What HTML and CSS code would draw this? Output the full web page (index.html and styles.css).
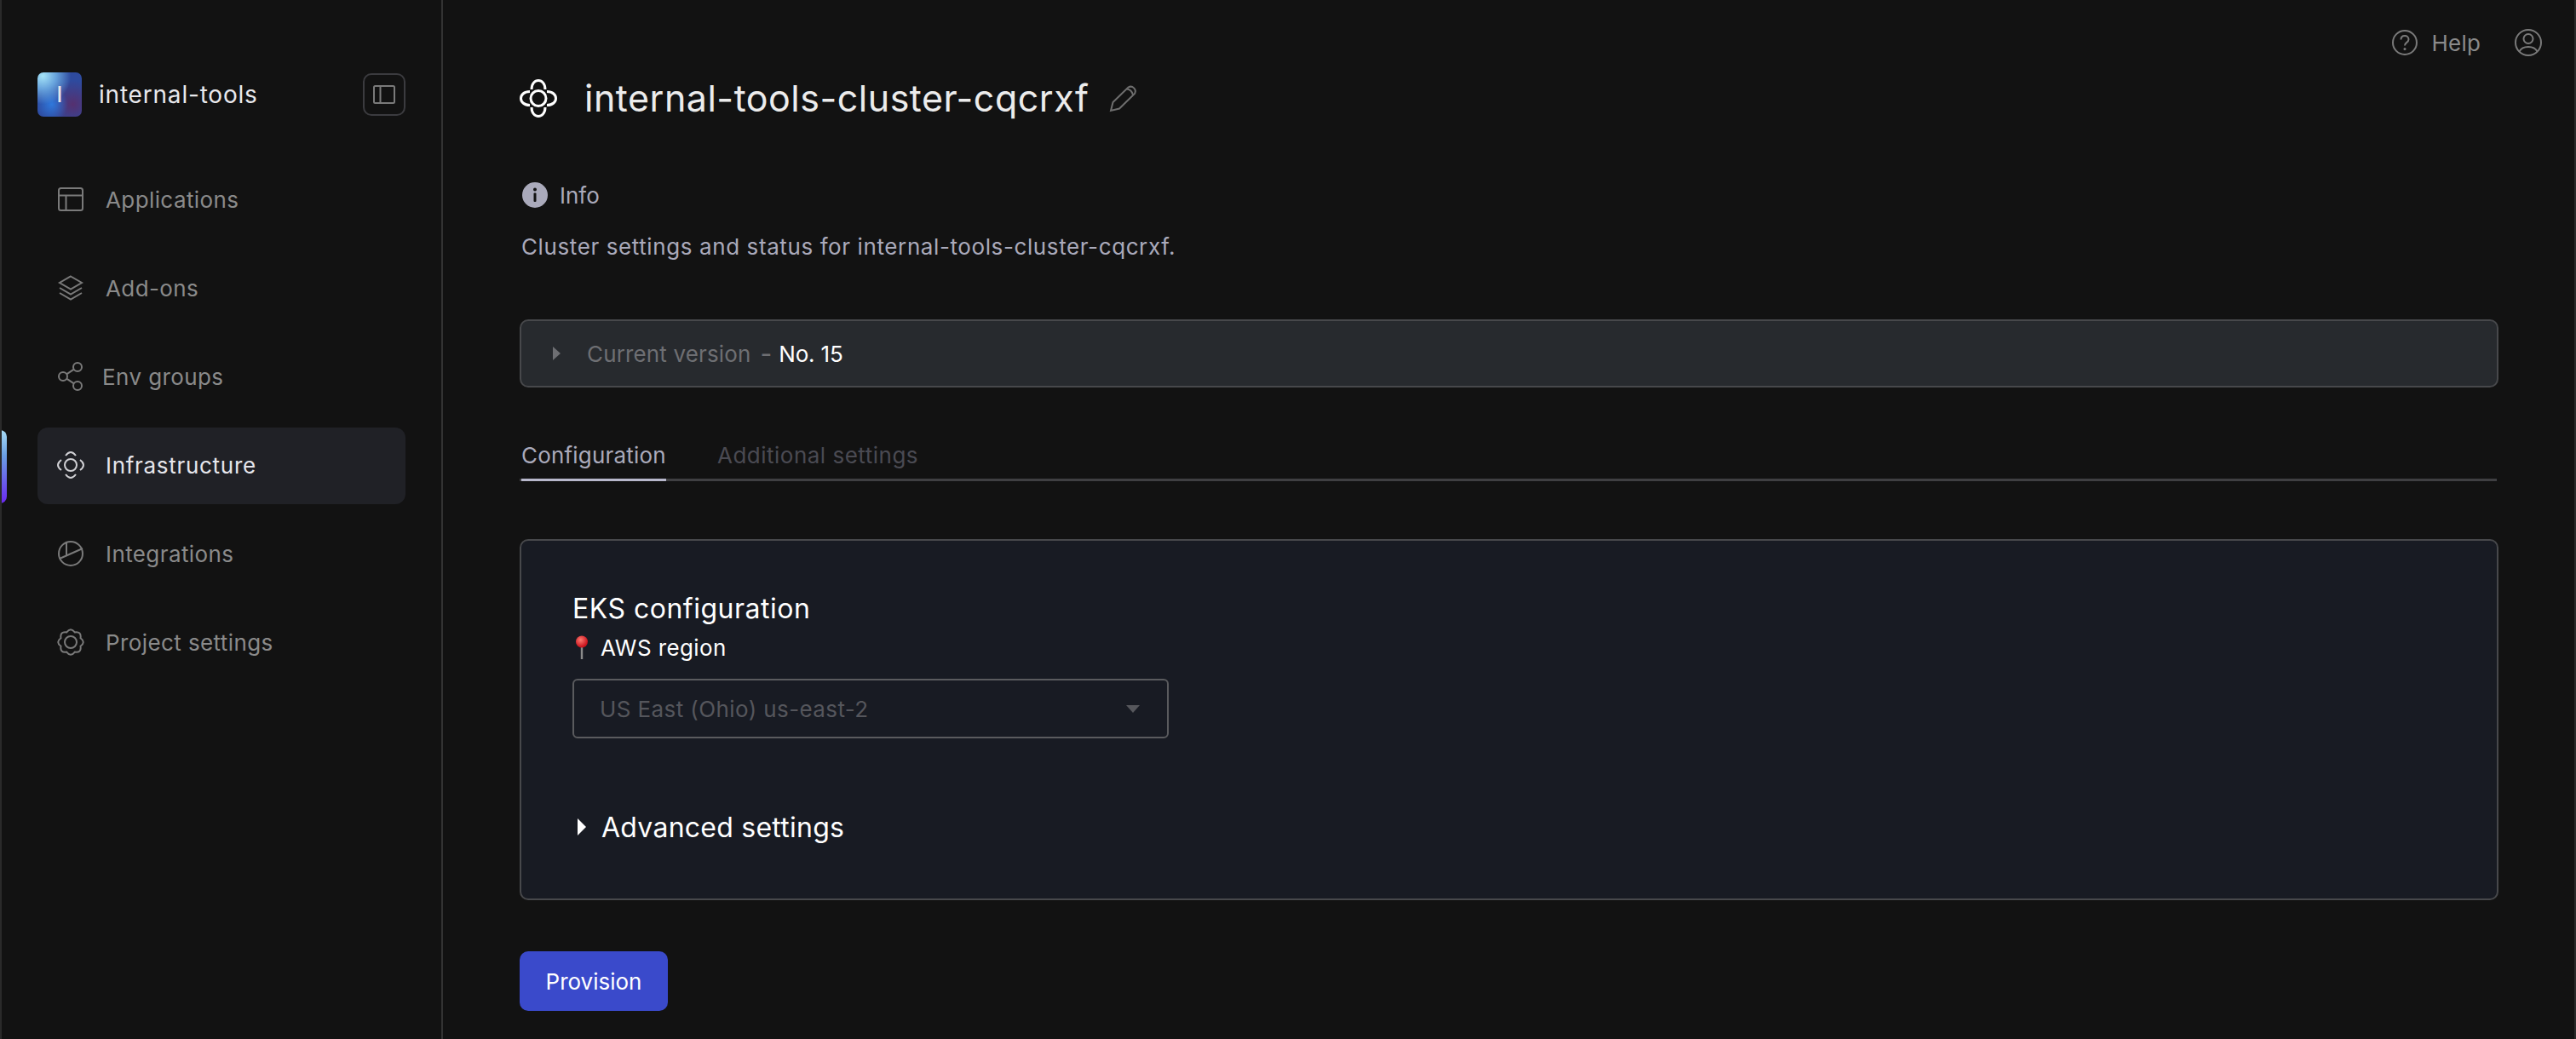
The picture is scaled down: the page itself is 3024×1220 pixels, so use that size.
FILE: index.html
```html
<!DOCTYPE html>
<html lang="en">
<head>
<meta charset="utf-8">
<title>internal-tools-cluster-cqcrxf</title>
<link rel="stylesheet" href="styles.css">
</head>
<body>
<aside class="sidebar">
  <div class="indicator"></div>
  <div class="brand">
    <div class="logo">I</div>
    <span class="brand-name">internal-tools</span>
    <button class="collapse" type="button" aria-label="Collapse">
      <svg width="26" height="22" viewBox="0 0 26 22" class="ico"><rect x="1" y="1" width="24" height="20" rx="1.5"/><path d="M8.5 1v20"/></svg>
    </button>
  </div>
  <nav class="nav">
    <a class="nav-item"><span class="slot"><svg class="ico" width="30" height="28" viewBox="0 0 30 28"><rect x="1" y="1" width="28" height="26" rx="2.5"/><path d="M1 9.5h28M9.5 9.5V27"/></svg></span><span>Applications</span></a>
    <a class="nav-item"><span class="slot"><svg class="ico" width="30" height="30" viewBox="0 0 30 30"><path d="M15 1.500 28 9 15 16.500 2 9z"/><path d="M2 15l13 7.500L28 15"/><path d="M2 21l13 7.500L28 21"/></svg></span><span>Add-ons</span></a>
    <a class="nav-item tight"><span class="slot"><svg class="ico" width="30" height="34" viewBox="0 0 30 34"><circle cx="6" cy="17" r="5"/><circle cx="23" cy="6" r="5"/><circle cx="23" cy="28" r="5"/><path d="M10.200 14.300 18.800 8.700M10.200 19.700l8.600 5.600"/></svg></span><span>Env groups</span></a>
    <a class="nav-item active"><span class="slot"><svg class="ico" width="32" height="32" viewBox="0 0 32 32"><circle cx="16" cy="16" r="7"/><path d="M10 5Q16-3 22 5M10 27Q16 35 22 27M5 10Q-3 16 5 22M27 10Q35 16 27 22"/></svg></span><span>Infrastructure</span></a>
    <a class="nav-item"><span class="slot"><svg class="ico" width="30" height="30" viewBox="0 0 30 30"><circle cx="15" cy="15" r="14"/><path d="M3 20.500 29 9M10 2v14.500"/></svg></span><span>Integrations</span></a>
    <a class="nav-item"><span class="slot"><svg class="ico" width="32" height="32" viewBox="0 0 32 32"><circle cx="16" cy="16" r="7"/><path d="M27.550 11.210Q34 16 27.550 20.790Q28.700 28.700 20.790 27.550Q16 34 11.210 27.550Q3.300 28.700 4.450 20.790Q-2 16 4.450 11.210Q3.300 3.300 11.210 4.450Q16-2 20.790 4.450Q28.700 3.300 27.550 11.210z"/></svg></span><span>Project settings</span></a>
  </nav>
</aside>
<main class="main">
  <header class="topbar">
    <a class="help"><svg class="ico" width="30" height="30" viewBox="0 0 30 30"><circle cx="15" cy="15" r="14"/><path d="M10.500 11.500c0-3 2-4.500 4.500-4.500s4.500 1.700 4.500 4.200c0 3.800-4.500 3.500-4.500 7.300"/><circle class="dot" cx="15" cy="22.500" r="1.500"/></svg><span>Help</span></a>
    <svg class="ico" width="32" height="32" viewBox="0 0 32 32"><circle cx="16" cy="16" r="15"/><circle cx="16" cy="11.500" r="5.500"/><path d="M5.500 26.500c2-4 5.500-5.500 10.500-5.500s8.500 1.500 10.500 5.500"/></svg>
  </header>
  <div class="title-row">
    <svg class="ico title-ico" width="44" height="45" viewBox="0 0 44 45"><circle cx="22" cy="22.500" r="9"/><path d="M14 12C14-2 30-2 30 12M14 33C14 47 30 47 30 33M12 14.500C-2 14.500-2 30.500 12 30.500M32 14.500C46 14.500 46 30.500 32 30.500"/></svg>
    <h1>internal-tools-cluster-cqcrxf</h1>
    <svg class="ico pencil" width="32" height="32" viewBox="0 0 32 32"><path d="M1 31 3.500 21 21.500 3.500A5.500 5.500 0 0 1 29 11L11 28.500z"/><path d="M19.500 5.500Q25.500 6 27 12.500"/></svg>
  </div>
  <div class="info">
    <svg width="30" height="30" viewBox="0 0 30 30"><circle cx="15" cy="15" r="15" fill="#aaaabb"/><circle cx="15" cy="8.500" r="2" fill="#121212"/><rect x="13.500" y="12.500" width="3" height="10.500" rx="1" fill="#121212"/></svg>
    <span>Info</span>
  </div>
  <p class="desc">Cluster settings and status for internal-tools-cluster-cqcrxf.</p>
  <div class="version">
    <i class="caret version-caret"></i>
    <span class="version-label">Current version</span>
    <span class="version-dash">-</span>
    <span class="version-num">No. 15</span>
  </div>
  <div class="tabs">
    <span class="tab active">Configuration</span>
    <span class="tab">Additional settings</span>
  </div>
  <section class="card">
    <h2>EKS configuration</h2>
    <div class="label">
      <svg width="22" height="28" viewBox="0 0 22 28"><defs><radialGradient id="pin" cx="40%" cy="35%" r="60%"><stop offset="0" stop-color="#ff7a70"/><stop offset="1" stop-color="#c9121c"/></radialGradient></defs><rect x="9.800" y="10" width="2.400" height="18" fill="#8b8b8b"/><circle cx="11" cy="7.500" r="7" fill="url(#pin)"/></svg>
      <span>AWS region</span>
    </div>
    <div class="select"><span>US East (Ohio) us-east-2</span><i class="select-caret"></i></div>
    <div class="advanced"><i class="caret advanced-caret"></i><span>Advanced settings</span></div>
  </section>
  <button class="provision" type="button">Provision</button>
</main>
</body>
</html>
```
FILE: styles.css
```css
* { box-sizing: border-box; }
html, body { margin: 0; height: 100%; }
body {
  display: flex;
  height: 1220px;
  background: #121212;
  color: #8a8a8a;
  font-family: Inter, "Noto Sans", sans-serif;
  border-left: 2px solid #2a2a2a;
  border-right: 2px solid #2a2a2a;
}
.ico { fill: none; stroke: #7a7a7a; stroke-width: 2; flex: none; overflow: visible; }
.sidebar {
  position: relative;
  width: 518px;
  flex: none;
  border-right: 2px solid #333;
  padding: 85px 42px 0;
}
.indicator {
  position: absolute;
  left: -2px;
  top: 505px;
  width: 8px;
  height: 86px;
  border-radius: 0 8px 8px 0;
  background: linear-gradient(180deg, #a8dcf5 0%, #6a9fe4 35%, #6a28f0 100%);
}
.brand { display: flex; align-items: center; height: 52px; }
.logo {
  width: 52px;
  height: 52px;
  flex: none;
  border-radius: 7px;
  display: flex;
  align-items: center;
  justify-content: center;
  color: #e4e4ea;
  font-size: 25px;
  font-weight: 500;
  background:
    radial-gradient(circle at 12% 8%, #a5e4f8 0, rgba(120,190,240,.75) 24%, rgba(90,150,230,0) 50%),
    radial-gradient(ellipse at 32% 72%, #2f78dc 0, rgba(47,111,212,0) 38%),
    radial-gradient(circle at 80% 72%, #55306f 0, rgba(85,48,111,0) 50%),
    #2e4a9e;
}
.brand-name {
  margin-left: 20px;
  flex: 1;
  color: #e8e8ec;
  font-size: 28px;
  letter-spacing: .8px;
}
.collapse {
  width: 50px;
  height: 50px;
  padding: 0;
  display: flex;
  align-items: center;
  justify-content: center;
  background: none;
  border: 2px solid #3b3b3f;
  border-radius: 10px;
}
.nav { display: flex; flex-direction: column; gap: 14px; margin-top: 53px; }
.nav-item {
  height: 90px;
  padding: 0 0 2px 23px;
  display: flex;
  align-items: center;
  gap: 25px;
  border-radius: 12px;
  font-size: 26px;
  letter-spacing: .4px;
}
.slot { width: 32px; flex: none; display: flex; justify-content: center; }
.nav-item.tight { gap: 21px; }
.nav-item.active { background: #202126; color: #e6e6ec; letter-spacing: .7px; }
.nav-item.active .ico { stroke: #d0d0d4; }
.main {
  flex: 1;
  min-width: 0;
  padding: 0 89px 0 90px;
}
.topbar {
  height: 66px;
  padding: 34px 0 0;
  margin-right: -51px;
  display: flex;
  align-items: center;
  justify-content: flex-end;
  gap: 40px;
}
.help { display: flex; align-items: center; gap: 17px; font-size: 26px; letter-spacing: .2px; }
.dot { fill: #7a7a7a; stroke: none; }
.title-row { display: flex; align-items: center; height: 46px; margin-top: 26px; }
.title-ico { stroke: #fff; stroke-width: 3; }
h1 {
  margin: 0 25px 0 32px;
  color: #ececec;
  font-size: 43px;
  font-weight: 400;
  line-height: 46px;
  letter-spacing: .5px;
}
.pencil { stroke: #6e6e6e; }
.info { display: flex; align-items: center; gap: 14px; height: 30px; margin-top: 76px; padding-left: 3px; color: #aaaabb; font-size: 26px; }
.desc { margin: 30px 0 0 2px; color: #aaaabb; font-size: 26px; line-height: 32px; letter-spacing: .6px; }
.version {
  height: 80px;
  margin-top: 69px;
  padding-left: 37px;
  display: flex;
  align-items: center;
  background: #272a2e;
  border: 2px solid #47484b;
  border-radius: 10px;
  color: #6e6f73;
  font-size: 26px;
}
.caret { width: 0; height: 0; border-style: solid; border-color: transparent; flex: none; }
.version-caret { border-width: 8px 0 8px 9px; border-left-color: #6e6f73; margin-right: 31px; }
.version-label { letter-spacing: .15px; }
.version-dash { margin: 0 8px 0 11px; font-size: 30px; line-height: 30px; }
.version-num { color: #fff; letter-spacing: -.2px; }
.tabs { display: flex; gap: 60px; height: 110px; margin-right: 2px; padding: 0 0 0 2px; border-bottom: 3px solid #3f3f42; align-items: flex-end; }
.tab {
  height: 48px;
  margin-bottom: -3px;
  padding-bottom: 8px;
  color: #4a4a52;
  font-size: 26px;
  line-height: 36px;
  letter-spacing: .5px;
  border-bottom: 3px solid transparent;
}
.tab.active { color: #aaaabb; border-bottom-color: #b8b8cc; letter-spacing: .2px; }
.card {
  height: 424px;
  margin-top: 68px;
  padding: 60px 60px 0;
  background: #181b23;
  border: 2px solid #47484b;
  border-radius: 10px;
  color: #fff;
}
h2 { margin: 0; font-size: 32px; font-weight: 400; line-height: 40px; letter-spacing: .5px; }
.label { display: flex; align-items: center; gap: 11px; height: 30px; margin-top: 10px; font-size: 26px; font-weight: 400; letter-spacing: .4px; }
.select {
  width: 700px;
  height: 70px;
  margin-top: 22px;
  padding: 0 32px 0 30px;
  display: flex;
  align-items: center;
  justify-content: space-between;
  border: 2px solid #5a5b5e;
  border-radius: 6px;
  color: #55565c;
  font-size: 26px;
  letter-spacing: .4px;
}
.select-caret { width: 0; height: 0; border-style: solid; border-color: #56575c transparent transparent; border-width: 9px 8px 0; }
.advanced { display: flex; align-items: center; height: 40px; margin-top: 84px; font-size: 32px; font-weight: 400; letter-spacing: .25px; }
.advanced-caret { border-width: 10px 0 10px 10px; border-left-color: #fff; margin: 0 18px 0 6px; }
.provision {
  display: block;
  width: 174px;
  height: 70px;
  margin-top: 60px;
  padding: 0;
  background: #3a4acb;
  border: 0;
  border-radius: 10px;
  color: #fff;
  font: 400 26px Inter, "Noto Sans", sans-serif;
}
```
